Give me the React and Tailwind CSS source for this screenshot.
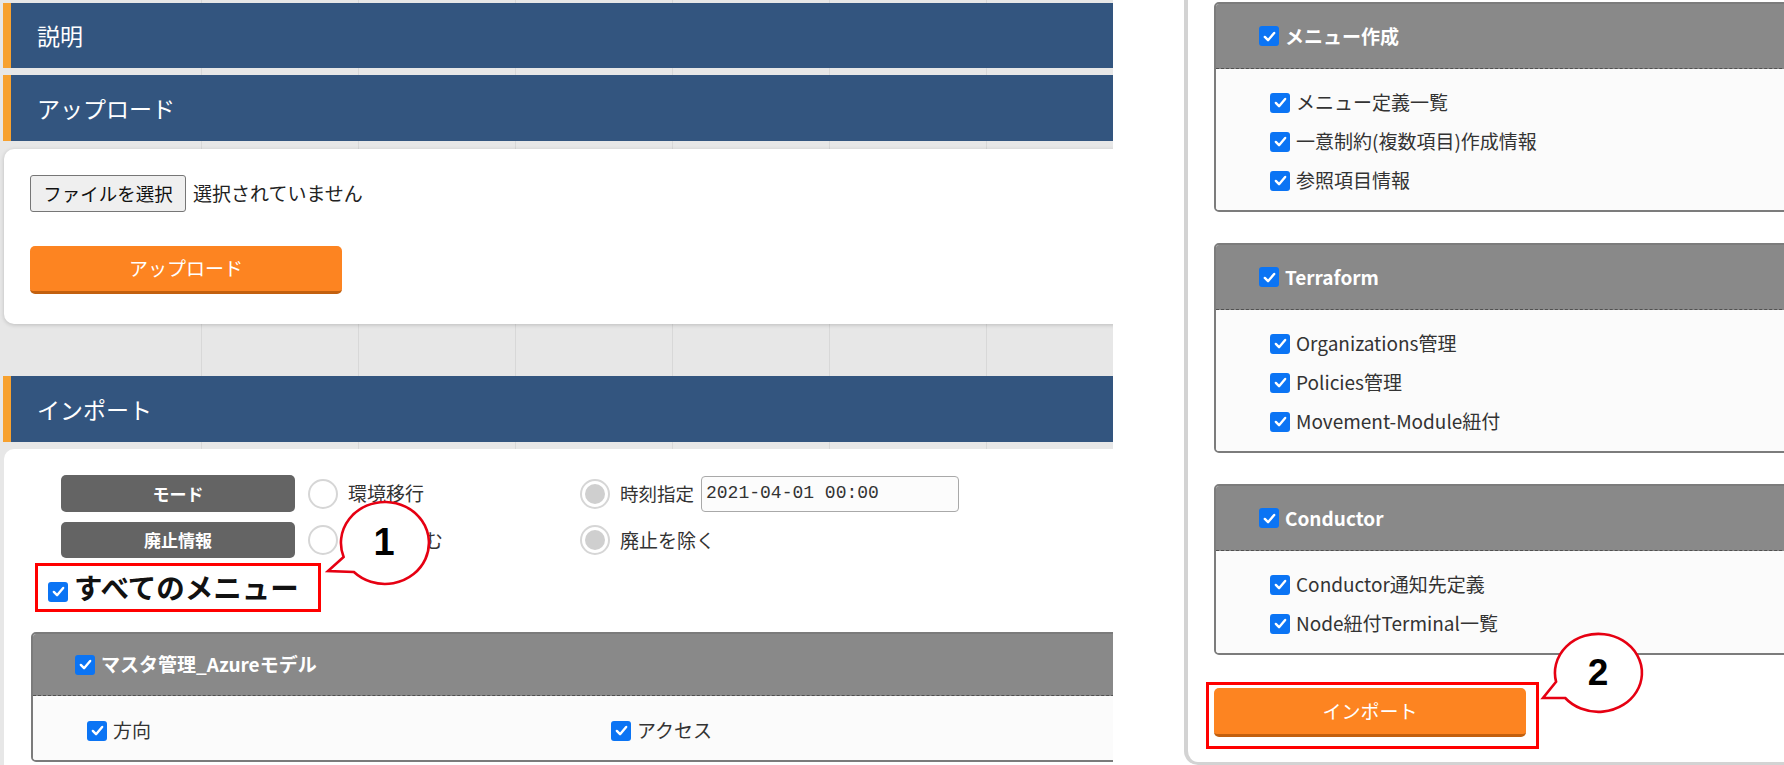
import React from "react";

const JP = "font-['Noto_Sans_CJK_JP','Noto_Sans',sans-serif]";

function Check({ className = "" }) {
  return (
    <span className={"w-[20px] h-[20px] rounded-[3px] bg-[#0b74f4] flex items-center justify-center shrink-0 " + className}>
      <svg viewBox="0 0 20 20" className="w-[17px] h-[17px]">
        <path d="M4.5 10.5 L8.3 14.3 L15.5 5.8" fill="none" stroke="white" strokeWidth="2.8" strokeLinecap="round" strokeLinejoin="round" />
      </svg>
    </span>
  );
}

function Bar({ title, h, className = "" }) {
  return (
    <div className={"ml-[3px] w-[1150px] bg-[#33557f] border-l-[8px] border-[#f7a12f] flex items-center pl-[26px] text-white text-[23px] " + h + " " + className}>
      {title}
    </div>
  );
}

function Radio({ selected }) {
  return (
    <span className="w-[30px] h-[30px] rounded-full border-2 border-[#d6d6d6] bg-white flex items-center justify-center shrink-0">
      {selected && <span className="w-[20px] h-[20px] rounded-full bg-[#cfcfcf]" />}
    </span>
  );
}

function Item({ label }) {
  return (
    <div className="h-[39px] flex items-center gap-[6px] text-[19px] text-[#333]">
      <Check />
      <span>{label}</span>
    </div>
  );
}

function Group({ title, items, className = "" }) {
  return (
    <div className={"w-[620px] border-2 border-[#7c7c7c] rounded-[5px] overflow-hidden " + className}>
      <div className="h-[65px] bg-[#898989] border-b border-dashed border-[#505050] flex items-center pl-[43px] gap-[6px] text-white font-bold text-[19px]">
        <Check />
        <span>{title}</span>
      </div>
      <div className="bg-[#fbfbfb] pt-[14px] pb-[10px] pl-[54px]">
        {items.map((it) => (
          <Item key={it} label={it} />
        ))}
      </div>
    </div>
  );
}

export default function App() {
  return (
    <div className={"relative w-[1784px] h-[765px] overflow-hidden flex bg-white " + JP}>
      {/* Left screenshot */}
      <div className="w-[1113px] h-[765px] shrink-0 overflow-hidden bg-[#e7e7e7] bg-[image:linear-gradient(90deg,#e7e7e7_0_200px,transparent_200px),repeating-linear-gradient(90deg,transparent_0_44px,#d8d8d8_44px_45px,transparent_45px_157px)] pt-[3px]">
        <Bar title="説明" h="h-[65px]" />
        <Bar title="アップロード" h="h-[66px]" className="mt-[7px]" />
        <div className="mt-[8px] ml-[4px] w-[1150px] h-[175px] bg-white rounded-[10px] shadow-[0_1px_4px_rgba(0,0,0,0.18)] pl-[26px] pt-[26px]">
          <div className="flex items-center h-[37px]">
            <div className="h-[37px] w-[156px] border border-[#767676] rounded-[3px] bg-[#efefef] text-[18.5px] text-[#111] flex items-center justify-center">
              ファイルを選択
            </div>
            <span className="ml-[7px] text-[19px] text-[#222]">選択されていません</span>
          </div>
          <div className="mt-[34px] w-[312px] h-[48px] rounded-[5px] bg-[#fd8421] border-b-[3px] border-[#c2600f] flex items-center justify-center text-white text-[19px]">
            アップロード
          </div>
        </div>
        <Bar title="インポート" h="h-[66px]" className="mt-[52px]" />
        <div className="mt-[7px] ml-[4px] w-[1150px] h-[400px] bg-white rounded-t-[10px] pt-[26px]">
          <div className="flex items-center h-[37px] pl-[57px]">
            <div className="w-[234px] h-[37px] rounded-[5px] bg-[#646464] text-white font-bold text-[17px] flex items-center justify-center">
              モード
            </div>
            <div className="ml-[13px] w-[272px] flex items-center">
              <Radio />
              <span className="ml-[10px] text-[19px] text-[#333]">環境移行</span>
            </div>
            <div className="flex items-center">
              <Radio selected />
              <span className="ml-[10px] text-[18.5px] text-[#333]">時刻指定</span>
              <div className="ml-[7px] w-[258px] h-[36px] border border-[#a9a9a9] rounded-[4px] bg-[#fcfcfc] flex items-center pl-[4px] font-['Liberation_Mono',monospace] text-[18px] text-[#333]">
                2021-04-01 00:00
              </div>
            </div>
          </div>
          <div className="mt-[10px] flex items-center h-[36px] pl-[57px]">
            <div className="w-[234px] h-[36px] rounded-[5px] bg-[#646464] text-white font-bold text-[17px] flex items-center justify-center">
              廃止情報
            </div>
            <div className="ml-[13px] w-[272px] flex items-center">
              <Radio />
              <span className="ml-[10px] text-[19px] text-[#333]">廃止を含む</span>
            </div>
            <div className="flex items-center">
              <Radio selected />
              <span className="ml-[10px] text-[19px] text-[#333]">廃止を除く</span>
            </div>
          </div>
          <div className="mt-[5px] ml-[31px] w-[286px] h-[49px] border-[3px] border-[#ff0000] flex items-center pl-[10px]">
            <Check className="translate-y-[4px]" />
            <span className="ml-[6px] text-[28.5px] font-bold text-[#111] leading-none whitespace-nowrap">すべてのメニュー</span>
          </div>
          <div className="mt-[20px] ml-[27px] w-[1200px] border-2 border-[#7b7b7b] rounded-[5px] overflow-hidden">
            <div className="h-[62px] bg-[#898989] border-b border-dashed border-[#505050] flex items-center pl-[42px] gap-[6px] text-white font-bold text-[19px]">
              <Check />
              <span>マスタ管理_Azureモデル</span>
            </div>
            <div className="bg-[#fbfbfb] pt-[15px] pb-[10px] pl-[54px] grid grid-cols-[524px_524px]">
              <Item label="方向" />
              <Item label="アクセス" />
            </div>
          </div>
        </div>
      </div>

      {/* gap */}
      <div className="w-[71px] shrink-0 bg-white" />

      {/* Right screenshot */}
      <div className="w-[600px] h-[765px] shrink-0 border-l-[4px] border-b-[3px] border-[#d3d3d3] rounded-bl-[14px] overflow-hidden bg-white pt-[2px] pl-[26px]">
        <Group title="メニュー作成" items={["メニュー定義一覧", "一意制約(複数項目)作成情報", "参照項目情報"]} />
        <Group className="mt-[31px]" title="Terraform" items={["Organizations管理", "Policies管理", "Movement-Module紐付"]} />
        <Group className="mt-[31px]" title="Conductor" items={["Conductor通知先定義", "Node紐付Terminal一覧"]} />
        <div className="mt-[27px] ml-[-8px] w-[333px] border-[3px] border-[#ff0000] pl-[5px] pt-[3px] pr-[10px] pb-[9px]">
          <div className="w-[312px] h-[49px] rounded-[5px] bg-[#fd8421] border-b-[3px] border-[#c2600f] flex items-center justify-center text-white text-[19px]">
            インポート
          </div>
        </div>
      </div>

      {/* Callouts */}
      <svg className="absolute left-0 top-0 pointer-events-none" width="1784" height="765" viewBox="0 0 1784 765">
        <path d="M343.6 557 L328 571 L353.9 572 A44 41 0 1 0 343.6 557 Z" fill="white" stroke="#e60012" strokeWidth="2.6" strokeLinejoin="miter" />
        <path d="M1556.1 681.8 L1543 698 L1565.2 698 A43.5 39 0 1 0 1556.1 681.8 Z" fill="white" stroke="#e60012" strokeWidth="2.6" strokeLinejoin="miter" />
      </svg>
      <span className="absolute left-[364px] top-[520px] w-[40px] h-[44px] flex items-center justify-center font-['Liberation_Sans',sans-serif] font-bold text-[38px] leading-none text-black">
        1
      </span>
      <span className="absolute left-[1578px] top-[650px] w-[40px] h-[44px] flex items-center justify-center font-['Liberation_Sans',sans-serif] font-bold text-[37px] leading-none text-black">
        2
      </span>
    </div>
  );
}
